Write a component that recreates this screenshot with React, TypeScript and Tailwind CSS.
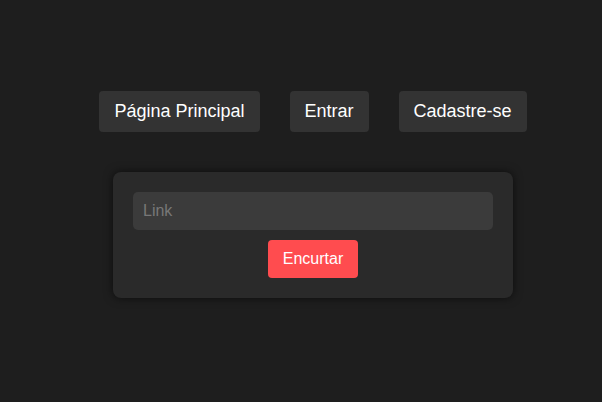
import React, { useState } from 'react';

export default function App() {
  const [link, setLink] = useState('');

  return (
    <div
      className="min-h-screen w-full bg-[#1e1e1e] flex flex-col items-center pt-[91px] pl-[24px]"
      style={{ fontFamily: '"Liberation Sans", Arial, sans-serif' }}
    >
      {/* Nav */}
      <nav className="flex items-center gap-[30px]">
        {['Página Principal', 'Entrar', 'Cadastre-se'].map((label) => (
          <button
            key={label}
            type="button"
            className="px-[15px] py-[10px] bg-[#333333] text-white text-[18px] leading-[21px] rounded-[4px] cursor-pointer"
          >
            {label}
          </button>
        ))}
      </nav>

      {/* Shortener card */}
      <div className="mt-[40px] w-[400px] p-5 bg-[#2a2a2a] rounded-[8px] shadow-[0_0_10px_rgba(0,0,0,0.6)] flex flex-col items-center gap-[10px]">
        <input
          type="text"
          placeholder="Link"
          value={link}
          onChange={(e) => setLink(e.target.value)}
          className="w-full h-[38px] px-[10px] bg-[#3b3b3b] rounded-[5px] text-[16px] text-white placeholder-[#777777] outline-none"
        />
        <button
          type="button"
          className="h-[38px] px-[15px] bg-[#ff4c4f] text-white text-[16px] rounded-[4px] cursor-pointer"
        >
          Encurtar
        </button>
      </div>
    </div>
  );
}
